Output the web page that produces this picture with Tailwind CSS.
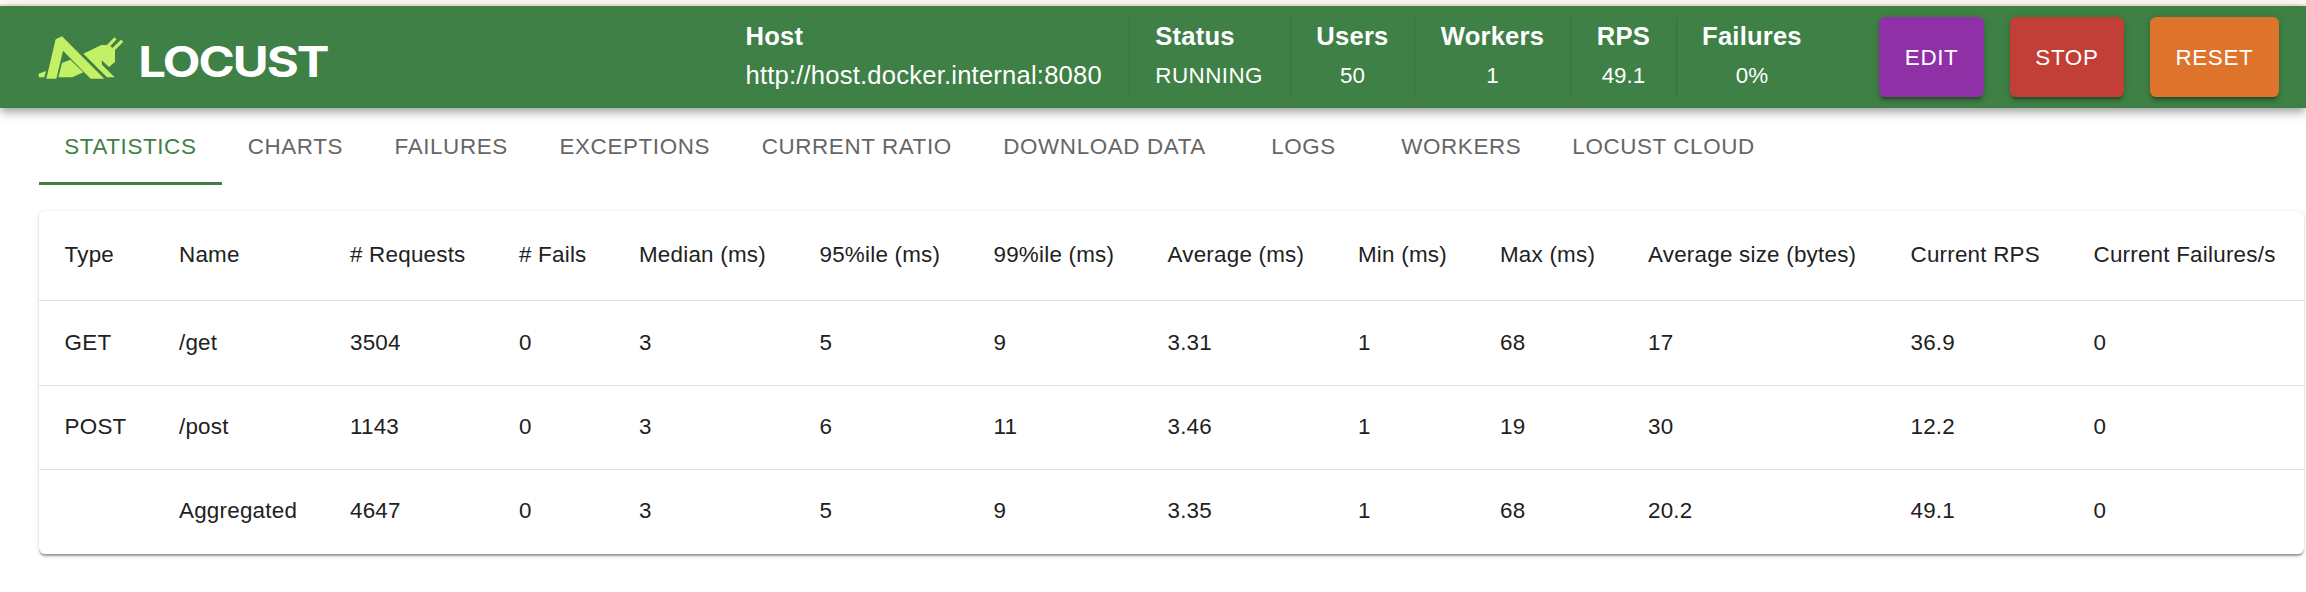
<!DOCTYPE html>
<html lang="en">
<head>
<meta charset="utf-8">
<title>Locust</title>
<script src="https://cdn.jsdelivr.net/npm/@tailwindcss/browser@4"></script>
</head>
<body class="h-[592px] overflow-hidden bg-white font-['Liberation_Sans',Arial,sans-serif] text-[22.4px] text-[#212121]">
<div class="h-1 bg-[#fef9f7]"></div>
<div class="h-0.5 bg-[#f6e4d6]"></div>
<header class="relative flex h-[101.7px] items-center bg-[#3e8045] pl-[38.4px] pr-[27px] text-white shadow-[0_3.2px_6.4px_-1.6px_rgba(0,0,0,0.2),0_6.4px_8px_0_rgba(0,0,0,0.14),0_1.6px_16px_0_rgba(0,0,0,0.12)]">
  <svg class="h-[60px] w-[300px] shrink-0 overflow-visible" viewBox="115 80 900 180" aria-label="Locust">
    <g fill="#c4f066">
      <path d="M117 220 139 212 134 231H117Z"/>
      <path d="M140 235 168 117 187 108 314 235H273L190 151 170 235Z"/>
      <path d="M176 231 187 188 212 178 251 216 218 231Z"/>
      <path d="M251 160 305 134H322L344 111 351 117 332 137 338 143 364 118 371 124 346 149V185L328 200 306 180 307 193 345 231H322Z"/>
    </g>
    <text x="416" y="231" textLength="568" lengthAdjust="spacingAndGlyphs" letter-spacing="-5" fill="#fff" font-family="Inter, sans-serif" font-weight="700" font-size="126">LOCUST</text>
  </svg>
  <div class="ml-auto flex h-20 items-stretch whitespace-nowrap text-center leading-[38.4px]">
    <div class="w-[409.3px] border-r-[1.6px] border-[#36743c] pl-[25px] text-left text-[25.6px]"><b class="block tracking-[0.2px]">Host</b><span class="block pt-px tracking-[0.2px]">http://host.docker.internal:8080</span></div>
    <div class="w-[161.2px] border-r-[1.6px] border-[#36743c] pl-[25.6px] text-left"><b class="block text-[25.6px] tracking-[0.2px]">Status</b><span class="block pt-[1.6px] tracking-[0.45px]">RUNNING</span></div>
    <div class="w-[124px] border-r-[1.6px] border-[#36743c]"><b class="block text-[25.6px] tracking-[0.2px]">Users</b><span class="block pt-[1.6px]">50</span></div>
    <div class="w-[156px] border-r-[1.6px] border-[#36743c]"><b class="block text-[25.6px] tracking-[0.2px]">Workers</b><span class="block pt-[1.6px]">1</span></div>
    <div class="w-[106px] border-r-[1.6px] border-[#36743c]"><b class="block text-[25.6px] tracking-[0.2px]">RPS</b><span class="block pt-[1.6px]">49.1</span></div>
    <div class="w-[150px]"><b class="block text-[25.6px] tracking-[0.2px]">Failures</b><span class="block pt-[1.6px]">0%</span></div>
  </div>
  <div class="ml-[52.2px] flex h-20 gap-[25.6px] tracking-[0.64px]">
    <button class="w-[105px] rounded-[6.4px] bg-[#9030a7] pt-px shadow-[0_4.8px_1.6px_-3.2px_rgba(0,0,0,0.2),0_3.2px_3.2px_rgba(0,0,0,0.14),0_1.6px_8px_rgba(0,0,0,0.12)]">EDIT</button>
    <button class="w-[114.4px] rounded-[6.4px] bg-[#c23f38] pt-px shadow-[0_4.8px_1.6px_-3.2px_rgba(0,0,0,0.2),0_3.2px_3.2px_rgba(0,0,0,0.14),0_1.6px_8px_rgba(0,0,0,0.12)]">STOP</button>
    <button class="w-[129.3px] rounded-[6.4px] bg-[#de742c] pt-px shadow-[0_4.8px_1.6px_-3.2px_rgba(0,0,0,0.2),0_3.2px_3.2px_rgba(0,0,0,0.14),0_1.6px_8px_rgba(0,0,0,0.12)]">RESET</button>
  </div>
</header>
<nav class="ml-[38.6px] flex h-[77.3px] whitespace-nowrap text-center leading-[78px] tracking-[0.62px] text-[#666]">
  <a class="w-[183.5px] border-b-[3px] border-[#3e8045] text-[#3e8045]">STATISTICS</a>
  <a class="w-[146.6px]">CHARTS</a>
  <a class="w-[165px]">FAILURES</a>
  <a class="w-[202.2px]">EXCEPTIONS</a>
  <a class="w-[241.7px]">CURRENT RATIO</a>
  <a class="w-[254px]">DOWNLOAD DATA</a>
  <a class="w-[144px]">LOGS</a>
  <a class="w-[171.5px]">WORKERS</a>
  <a class="w-[233px]">LOCUST CLOUD</a>
</nav>
<main class="ml-[39px] mt-[25.6px] w-[2265px] rounded-[6.4px] shadow-[0_3.2px_1.6px_-1.6px_rgba(0,0,0,0.2),0_1.6px_1.6px_rgba(0,0,0,0.14),0_1.6px_4.8px_rgba(0,0,0,0.12)]">
  <table class="w-full table-fixed border-separate border-spacing-0 whitespace-nowrap text-left leading-8 tracking-[0.23px]">
    <colgroup><col class="w-[114.4px]"><col class="w-[171px]"><col class="w-[169px]"><col class="w-[120px]"><col class="w-[180.5px]"><col class="w-[174px]"><col class="w-[174px]"><col class="w-[190.5px]"><col class="w-[142px]"><col class="w-[148px]"><col class="w-[262.5px]"><col class="w-[183px]"><col></colgroup>
    <thead><tr class="h-[90px] *:border-b *:border-[#e0e0e0] *:p-0 *:pl-[25.6px] *:font-normal"><th>Type</th><th>Name</th><th># Requests</th><th># Fails</th><th>Median (ms)</th><th>95%ile (ms)</th><th>99%ile (ms)</th><th>Average (ms)</th><th>Min (ms)</th><th>Max (ms)</th><th>Average size (bytes)</th><th>Current RPS</th><th>Current Failures/s</th></tr></thead>
    <tbody>
      <tr class="h-[85px] *:border-b *:border-[#e0e0e0] *:p-0 *:pl-[25.6px]"><td>GET</td><td>/get</td><td>3504</td><td>0</td><td>3</td><td>5</td><td>9</td><td>3.31</td><td>1</td><td>68</td><td>17</td><td>36.9</td><td>0</td></tr>
      <tr class="h-[84px] *:border-b *:border-[#e0e0e0] *:p-0 *:pl-[25.6px]"><td>POST</td><td>/post</td><td>1143</td><td>0</td><td>3</td><td>6</td><td>11</td><td>3.46</td><td>1</td><td>19</td><td>30</td><td>12.2</td><td>0</td></tr>
      <tr class="h-[84px] *:p-0 *:pb-0.5 *:pl-[25.6px]"><td></td><td>Aggregated</td><td>4647</td><td>0</td><td>3</td><td>5</td><td>9</td><td>3.35</td><td>1</td><td>68</td><td>20.2</td><td>49.1</td><td>0</td></tr>
    </tbody>
  </table>
</main>
</body>
</html>
